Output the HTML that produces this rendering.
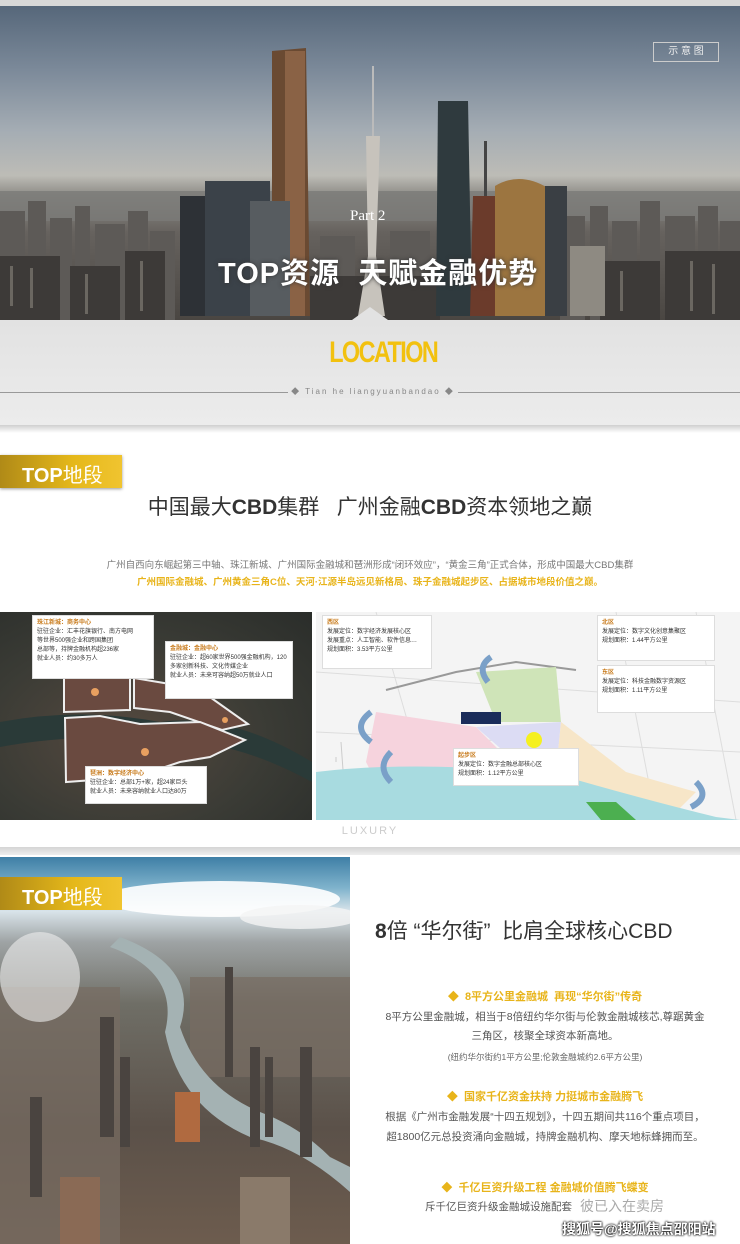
<!DOCTYPE html>
<html><head><meta charset="utf-8"><style>
*{margin:0;padding:0;box-sizing:border-box}
body{width:740px;height:1244px;position:relative;overflow:hidden;background:#fff;font-family:"Liberation Sans","Noto Sans CJK SC",sans-serif}
.a{position:absolute}
.box{position:absolute;background:#fff;font-size:6px;line-height:9px;color:#333;padding:3px 4px;border:1px solid #ddd}
.box b{color:#c87a1a}
</style></head><body>
<!-- hero -->
<div class="a" style="left:0;top:0;width:740px;height:6px;background:#d8d8d8"></div>
<div class="a" style="left:0;top:6px;width:740px;height:314px;background:linear-gradient(#56677a 0%,#7b8999 20%,#a5adb4 40%,#bdbcb6 54%,#8f8d88 60%,#66625e 72%,#4a4642 100%)"></div>
<svg class="a" style="left:0;top:6px" width="740" height="314">
<g fill="#7b7a78" opacity=".8">
<rect x="0" y="185" width="740" height="30"/>
</g>
<g fill="#5d5a57">
<rect x="0" y="205" width="25" height="109"/><rect x="28" y="195" width="18" height="119"/><rect x="50" y="212" width="22" height="102"/><rect x="75" y="200" width="15" height="114"/><rect x="95" y="218" width="30" height="96"/><rect x="128" y="205" width="20" height="109"/><rect x="150" y="225" width="25" height="89"/>
<rect x="560" y="210" width="25" height="104"/><rect x="590" y="200" width="18" height="114"/><rect x="612" y="215" width="25" height="99"/><rect x="640" y="195" width="20" height="119"/><rect x="665" y="210" width="30" height="104"/><rect x="698" y="200" width="20" height="114"/><rect x="720" y="215" width="20" height="99"/>
<rect x="320" y="230" width="35" height="84"/><rect x="390" y="225" width="40" height="89"/>
</g>
<g fill="#3d3a38">
<rect x="0" y="250" width="60" height="64"/><rect x="70" y="260" width="50" height="54"/><rect x="125" y="245" width="40" height="69"/><rect x="600" y="255" width="60" height="59"/><rect x="665" y="245" width="75" height="69"/><rect x="310" y="270" width="130" height="44"/>
</g>
<g fill="#8a857d" opacity=".6">
<rect x="10" y="260" width="3" height="40"/><rect x="30" y="262" width="3" height="40"/><rect x="85" y="268" width="3" height="40"/><rect x="140" y="255" width="3" height="50"/><rect x="620" y="265" width="3" height="40"/><rect x="690" y="255" width="3" height="50"/><rect x="712" y="258" width="3" height="50"/>
</g>
<polygon fill="#6a4a32" points="272,45 306,42 310,310 272,310"/>
<rect x="285" y="45" width="20" height="265" fill="#8a6245"/>
<polygon fill="#c7c3bc" points="366,130 380,130 376,250 385,310 358,310 368,250"/>
<rect x="372" y="60" width="2" height="70" fill="#bbb"/>
<polygon fill="#2f3a3e" points="438,95 468,95 472,310 436,310"/>
<polygon fill="#6b3b2b" points="473,190 510,190 512,310 470,310"/>
<rect x="484" y="135" width="3" height="55" fill="#444"/>
<path d="M495 180 Q520 165 548 182 L548 310 L495 310Z" fill="#9c7540"/>
<rect x="545" y="180" width="22" height="130" fill="#3a3f44"/>
<rect x="205" y="175" width="65" height="135" fill="#3b4249"/>
<rect x="180" y="190" width="25" height="120" fill="#2d3136"/>
<rect x="250" y="195" width="40" height="115" fill="#575c60"/>
<rect x="570" y="240" width="35" height="70" fill="#8e8a82"/>
</svg>
<div class="a" style="left:653px;top:42px;width:66px;height:20px;border:1px solid #ccc;color:#eee;font-size:10px;text-align:center;line-height:18px">示 意 图</div>
<div class="a" style="left:350px;top:208px;color:#fff;font-size:15px;font-family:'Liberation Serif',serif">Part 2</div>
<div class="a" style="left:218px;top:250px;color:#fff;font-size:29px;font-weight:bold;letter-spacing:1px;text-shadow:0 0 4px #333">TOP资源&nbsp;&nbsp;天赋金融优势</div>
<!-- location band -->
<div class="a" style="left:0;top:320px;width:740px;height:105px;background:linear-gradient(#e2e2e2,#ececec)"></div>
<div class="a" style="left:352px;top:307px;width:0;height:0;border-left:18px solid transparent;border-right:18px solid transparent;border-bottom:13px solid #e2e2e2"></div>
<div class="a" style="left:316px;top:336px;width:120px;text-align:center;color:#f2c10f;font-size:30px;font-weight:bold;letter-spacing:-2px;transform:scaleX(.78);transform-origin:center">LOCATION</div>
<div class="a" style="left:0;top:392px;width:740px;height:1px;background:#999"></div>
<div class="a" style="left:288px;top:386px;width:170px;height:12px;background:#e8e8e8;color:#888;font-size:8px;letter-spacing:2px;text-align:center;line-height:12px">◆ Tian he liangyuanbandao ◆</div>
<div class="a" style="left:0;top:425px;width:740px;height:8px;background:linear-gradient(#cfcfcf,#fff)"></div>
<!-- section 1 -->
<div class="a" style="left:0;top:455px;width:122px;height:33px;background:linear-gradient(90deg,#b08a17,#e5b81a 60%,#f0c430);box-shadow:0 1px 3px #999"></div>
<div class="a" style="left:22px;top:459px;color:#fff;font-size:20px;font-weight:bold">TOP<span style="font-weight:normal">地段</span></div>
<div class="a" style="left:0;top:491px;width:740px;text-align:center;color:#333;font-size:21px">中国最大<b>CBD</b>集群&nbsp;&nbsp;&nbsp;广州金融<b>CBD</b>资本领地之巅</div>
<div class="a" style="left:0;top:557px;width:740px;text-align:center;color:#777;font-size:9.5px">广州自西向东崛起第三中轴、珠江新城、广州国际金融城和琶洲形成“闭环效应”，“黄金三角”正式合体，形成中国最大CBD集群</div>
<div class="a" style="left:0;top:574px;width:740px;text-align:center;color:#e8b41a;font-size:9.5px;font-weight:bold">广州国际金融城、广州黄金三角C位、天河·江源半岛远见新格局、珠子金融城起步区、占据城市地段价值之巅。</div>
<!-- maps -->
<div class="a" style="left:0;top:612px;width:312px;height:208px;background:radial-gradient(ellipse at 40% 60%,#55493f,#3a3b35 55%,#2a2d2a)"></div>
<svg class="a" style="left:0;top:612px" width="312" height="208">
<path d="M0 110 Q80 95 160 110 Q230 100 312 150 L312 170 Q230 125 160 130 Q80 120 0 135Z" fill="#2a3a38"/>
<polygon points="64,62 130,66 130,98 64,100" fill="#6a4a40" stroke="#eee" stroke-width="2"/>
<polygon points="134,66 170,72 200,78 248,112 222,118 170,100 134,96" fill="#6a4a40" stroke="#eee" stroke-width="2"/>
<polygon points="65,106 100,104 140,112 200,110 245,128 210,145 180,150 135,165 66,170" fill="#6a4a40" stroke="#eee" stroke-width="2"/>
<circle cx="95" cy="80" r="4" fill="#e8a060"/><circle cx="145" cy="140" r="4" fill="#e8a060"/><circle cx="225" cy="108" r="3" fill="#e8a060"/>
</svg>
<div class="box" style="left:32px;top:615px;width:122px;height:64px"><b>珠江新城：商务中心</b><br>驻驻企业：汇丰花旗银行、南方电网<br>等世界500强企业和跨国集团<br>总部等，持牌金融机构超236家<br>就业人员：约30多万人</div>
<div class="box" style="left:165px;top:641px;width:128px;height:58px"><b>金融城：金融中心</b><br>驻驻企业：超60家世界500强金融机构，120多家创新科技、文化传媒企业<br>就业人员：未来可容纳超50万就业人口</div>
<div class="box" style="left:85px;top:766px;width:122px;height:38px"><b>琶洲：数字经济中心</b><br>驻驻企业：总部1万+家，超24家巨头<br>就业人员：未来容纳就业人口达80万</div>
<div class="a" style="left:316px;top:612px;width:424px;height:208px;background:#f4f4f4"></div>
<svg class="a" style="left:316px;top:612px" width="424" height="208">
<g stroke="#ddd" stroke-width="1" fill="none"><path d="M0 60 L424 90"/><path d="M60 0 L120 208"/><path d="M300 0 L340 208"/><path d="M380 0 L420 208"/><path d="M0 120 L424 140"/></g>
<path d="M70 78 L140 60 L200 50 L260 58" stroke="#999" stroke-width="2" fill="none"/>
<polygon points="60,100 160,115 195,150 210,160 60,170 50,150" fill="#f6d3dd"/>
<polygon points="160,60 240,55 245,110 180,110" fill="#cfe4b8"/>
<polygon points="160,115 245,110 240,160 200,150" fill="#dcdcf4"/>
<polygon points="245,110 310,160 380,180 360,200 250,175 240,160" fill="#f7e6c8"/>
<path d="M20 145 L20 150 M25 130 L30 200" stroke="#ccc"/>
<path d="M0 160 Q100 148 240 162 Q330 188 400 205 L424 208 L0 208Z" fill="#a8dbe0"/>
<polygon points="270,190 300,190 320,208 285,208" fill="#4caf50"/>
<rect x="145" y="100" width="40" height="12" fill="#1a2c5a"/>
<circle cx="218" cy="128" r="8" fill="#f5f020"/>
<path d="M55 100 Q35 115 55 130" stroke="#7aa0c8" stroke-width="6" fill="none"/>
<path d="M175 45 Q160 55 172 70" stroke="#7aa0c8" stroke-width="6" fill="none"/>
<path d="M75 140 Q60 155 75 170" stroke="#7aa0c8" stroke-width="6" fill="none"/>
<path d="M380 170 Q395 185 375 195" stroke="#7aa0c8" stroke-width="6" fill="none"/>
</svg>
<div class="box" style="left:322px;top:615px;width:110px;height:54px"><b>西区</b><br>发展定位：数字经济发展核心区<br>发展重点：人工智能、软件信息…<br>规划面积：3.53平方公里</div>
<div class="box" style="left:597px;top:615px;width:118px;height:46px"><b>北区</b><br>发展定位：数字文化创意集聚区<br>规划面积：1.44平方公里</div>
<div class="box" style="left:597px;top:665px;width:118px;height:48px"><b>东区</b><br>发展定位：科技金融数字资源区<br>规划面积：1.11平方公里</div>
<div class="box" style="left:453px;top:748px;width:126px;height:38px"><b>起步区</b><br>发展定位：数字金融总部核心区<br>规划面积：1.12平方公里</div>
<div class="a" style="left:0;top:825px;width:740px;text-align:center;color:#ccc;font-size:11px;letter-spacing:2px">LUXURY</div>
<div class="a" style="left:0;top:847px;width:740px;height:8px;background:linear-gradient(#d4d4d4,#eee)"></div>
<!-- section 2 -->
<div class="a" style="left:0;top:857px;width:350px;height:387px;background:linear-gradient(#3f7fa6 0%,#7fb3cc 8%,#d9e4ea 14%,#9ea3a4 22%,#6f6e66 38%,#5b5149 70%,#6d5c4e 100%)"></div>
<svg class="a" style="left:0;top:857px" width="350" height="387">
<g fill="#786c62" opacity=".7"><rect x="0" y="130" width="120" height="257"/><rect x="190" y="120" width="160" height="100"/></g>
<path d="M120 80 Q200 110 180 170 Q200 230 260 255 Q300 270 330 300 L350 310 L350 335 Q300 290 250 280 Q180 250 165 175 Q180 115 110 90Z" fill="#a4b2b3"/>
<ellipse cx="220" cy="42" rx="120" ry="18" fill="#fff" opacity=".9"/>
<ellipse cx="300" cy="60" rx="60" ry="12" fill="#f4f4f4" opacity=".8"/>
<ellipse cx="40" cy="120" rx="40" ry="45" fill="#eee" opacity=".6"/>
<g fill="#4a4440"><rect x="100" y="160" width="14" height="120"/><rect x="120" y="200" width="10" height="90"/><rect x="225" y="110" width="8" height="110"/><rect x="300" y="190" width="12" height="110"/><rect x="250" y="190" width="10" height="100"/><rect x="265" y="200" width="8" height="80"/><rect x="30" y="240" width="12" height="100"/></g>
<rect x="175" y="235" width="25" height="50" fill="#b06a40"/>
<rect x="60" y="320" width="40" height="67" fill="#8a6a55"/><rect x="240" y="320" width="50" height="67" fill="#8a7a6a"/>
</svg>
<div class="a" style="left:0;top:877px;width:122px;height:33px;background:linear-gradient(90deg,#b08a17,#e5b81a 60%,#f0c430)"></div>
<div class="a" style="left:22px;top:881px;color:#fff;font-size:20px;font-weight:bold">TOP<span style="font-weight:normal">地段</span></div>
<div class="a" style="left:375px;top:915px;color:#333;font-size:21px;white-space:nowrap"><b>8</b>倍 “华尔街”&nbsp;&nbsp;比肩全球核心CBD</div>
<div class="a" style="left:350px;top:988px;width:390px;text-align:center;color:#e8b41a;font-size:11px;font-weight:bold">◆&nbsp; 8平方公里金融城&nbsp; 再现“华尔街”传奇</div>
<div class="a" style="left:350px;top:1008px;width:390px;text-align:center;color:#555;font-size:10.5px;line-height:19px">8平方公里金融城，相当于8倍纽约华尔街与伦敦金融城核芯,尊踞黄金<br>三角区，核聚全球资本新高地。</div>
<div class="a" style="left:350px;top:1051px;width:390px;text-align:center;color:#666;font-size:8.5px">(纽约华尔街约1平方公里;伦敦金融城约2.6平方公里)</div>
<div class="a" style="left:350px;top:1088px;width:390px;text-align:center;color:#e8b41a;font-size:11px;font-weight:bold">◆&nbsp; 国家千亿资金扶持 力挺城市金融腾飞</div>
<div class="a" style="left:350px;top:1107px;width:390px;text-align:center;color:#555;font-size:10.5px;line-height:20px">根据《广州市金融发展“十四五规划》，十四五期间共116个重点项目，<br>超1800亿元总投资涌向金融城，持牌金融机构、摩天地标蜂拥而至。</div>
<div class="a" style="left:350px;top:1179px;width:390px;text-align:center;color:#e8b41a;font-size:11px;font-weight:bold">◆&nbsp; 千亿巨资升级工程 金融城价值腾飞蝶变</div>
<div class="a" style="left:425px;top:1199px;color:#555;font-size:10.5px">斥千亿巨资升级金融城设施配套</div>
<div class="a" style="left:580px;top:1196px;color:#aaa;font-size:14px">彼已入在卖房</div>
<div class="a" style="left:562px;top:1219px;color:#fff;font-size:14px;font-weight:bold;text-shadow:0 0 2px #000,0 0 2px #000">搜狐号@搜狐焦点邵阳站</div>
</body></html>
